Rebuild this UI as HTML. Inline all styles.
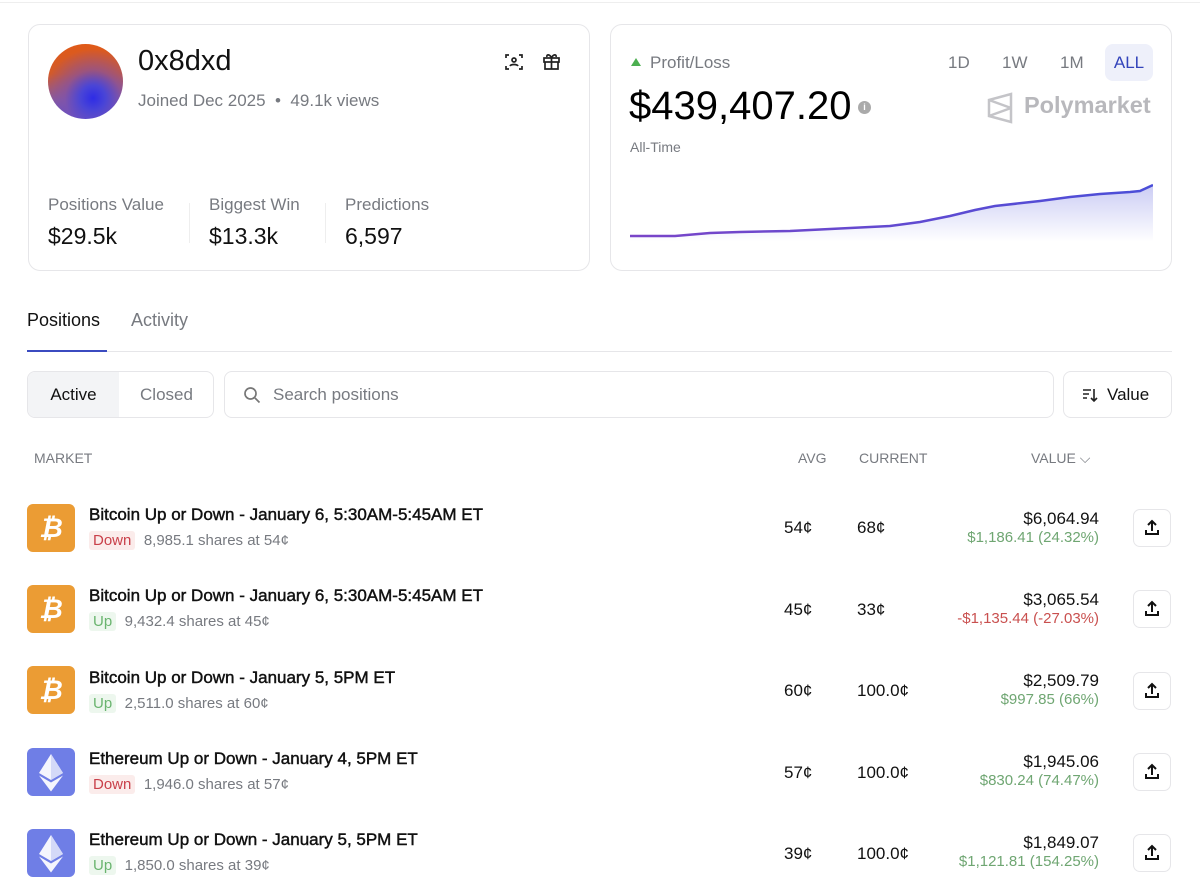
<!DOCTYPE html>
<html><head><meta charset="utf-8"><style>
*{box-sizing:border-box;margin:0;padding:0}
body{width:1200px;height:894px;background:#fff;font-family:"Liberation Sans",sans-serif;color:#111;position:relative;overflow:hidden}
.a{position:absolute}
.card{position:absolute;border:1px solid #e6e6e9;border-radius:12px;background:#fff}
.g{color:#777a80}
.row .t{font-size:17px;font-weight:normal;color:#111;-webkit-text-stroke:0.45px #111}
.tag{display:inline-block;padding:1px 4px;border-radius:3px;font-size:15px}
.dn{background:#fbeceb;color:#c9404a}
.up{background:#edf7ee;color:#6ab46f}
.num{font-size:17px}
.btn{position:absolute;width:38px;height:38px;border:1px solid #e6e6e9;border-radius:7px}
.btc{position:absolute;width:48px;height:48px;border-radius:6px;background:#eb9c34;color:#fff;font-size:27px;font-weight:bold;font-style:italic;text-align:center;line-height:48px}
</style></head><body>
<div class="a" style="left:0;top:2px;width:1200px;height:1px;background:#eee"></div>

<div class="card" style="left:28px;top:24px;width:562px;height:247px">
  <div class="a" style="left:19px;top:19px;width:75px;height:75px;border-radius:50%;background:radial-gradient(circle at 60% 72%,#2e2ce6 0%,#4a45d6 18%,rgba(120,80,180,0.6) 40%,rgba(200,90,60,0) 70%),linear-gradient(180deg,#e05a18 0%,#d25a2a 40%,#8b5a9a 75%,#5a4fd0 100%)"></div>
  <div class="a" style="left:109px;top:20px;font-size:29px;color:#111">0x8dxd</div>
  <div class="a g" style="left:109px;top:66px;font-size:17px">Joined Dec 2025 &nbsp;•&nbsp; 49.1k views</div>
  <svg class="a" style="left:476px;top:28px" width="18" height="18" viewBox="0 0 18 18" fill="none" stroke="#222" stroke-width="1.7"><path d="M1 5V2h3M14 2h3v3M17 13v3h-3M4 16H1v-3"/><circle cx="9" cy="7" r="2"/><path d="M5 13c1-2 7-2 8 0"/></svg>
  <svg class="a" style="left:513px;top:27px" width="19" height="19" viewBox="0 0 19 19" fill="none" stroke="#222" stroke-width="1.7"><rect x="2" y="6" width="15" height="4"/><path d="M3 10v7h13v-7M9.5 6v11M9.5 6C8 2 4 2 5 5M9.5 6c1.5-4 5.5-4 4.5-1"/></svg>
  <div class="a g" style="left:19px;top:170px;font-size:17px">Positions Value</div>
  <div class="a" style="left:19px;top:198px;font-size:23px">$29.5k</div>
  <div class="a" style="left:160px;top:178px;width:1px;height:40px;background:#eee"></div>
  <div class="a g" style="left:180px;top:170px;font-size:17px">Biggest Win</div>
  <div class="a" style="left:180px;top:198px;font-size:23px">$13.3k</div>
  <div class="a" style="left:296px;top:178px;width:1px;height:40px;background:#eee"></div>
  <div class="a g" style="left:316px;top:170px;font-size:17px">Predictions</div>
  <div class="a" style="left:316px;top:198px;font-size:23px">6,597</div>
</div>

<div class="card" style="left:610px;top:24px;width:562px;height:247px">
  <div class="a" style="left:20px;top:33px;width:0;height:0;border-left:5px solid transparent;border-right:5px solid transparent;border-bottom:8px solid #4caf50"></div>
  <div class="a g" style="left:39px;top:28px;font-size:17px">Profit/Loss</div>
  <div class="a g" style="left:337px;top:28px;font-size:17px">1D</div>
  <div class="a g" style="left:391px;top:28px;font-size:17px">1W</div>
  <div class="a g" style="left:449px;top:28px;font-size:17px">1M</div>
  <div class="a" style="left:494px;top:19px;width:48px;height:37px;border-radius:8px;background:#eef0fa;color:#3344bb;font-size:17px;text-align:center;line-height:37px">ALL</div>
  <div class="a" style="left:18px;top:59px;font-size:40px;color:#000">$439,407.20</div>
  <div class="a" style="left:247px;top:76px;width:13px;height:13px;border-radius:50%;background:#aaa;color:#fff;font-size:9px;text-align:center;line-height:13px;font-weight:bold">i</div>
  <svg class="a" style="left:376px;top:67px" width="26" height="32" viewBox="0 0 26 32" fill="none" stroke="#c4c4c8" stroke-width="2.5"><path d="M2 8L24 2v28L2 24zM2 8l22 8M2 24l22-8"/></svg>
  <div class="a" style="left:413px;top:67px;font-size:23.5px;color:#b8b8bc;font-weight:bold">Polymarket</div>
  <div class="a g" style="left:19px;top:114px;font-size:14px">All-Time</div>
  <svg class="a" style="left:19px;top:155px" width="523" height="65" viewBox="0 0 523 65">
    <defs><linearGradient id="f" x1="0" y1="0" x2="0" y2="1"><stop offset="0" stop-color="#6a6ee0" stop-opacity=".35"/><stop offset="1" stop-color="#6a6ee0" stop-opacity="0"/></linearGradient>
    <linearGradient id="l" x1="0" x2="1"><stop offset="0" stop-color="#7a45c8"/><stop offset="1" stop-color="#4a4ed8"/></linearGradient></defs>
    <path d="M0 56L45 56L80 53L110 52L160 51L220 48L260 46L290 42L320 36L345 30L365 26L410 21L440 17L470 14L500 12L510 11L523 5L523 62L0 62Z" fill="url(#f)"/>
    <path d="M0 56L45 56L80 53L110 52L160 51L220 48L260 46L290 42L320 36L345 30L365 26L410 21L440 17L470 14L500 12L510 11L523 5" fill="none" stroke="url(#l)" stroke-width="2.5"/>
  </svg>
</div>

<div class="a" style="left:27px;top:310px;font-size:18px;color:#111">Positions</div>
<div class="a g" style="left:131px;top:310px;font-size:18px">Activity</div>
<div class="a" style="left:27px;top:351px;width:1145px;height:1px;background:#e6e6e9"></div>
<div class="a" style="left:27px;top:350px;width:80px;height:2px;background:#3b4bc0"></div>

<div class="a" style="left:27px;top:371px;width:187px;height:47px;border:1px solid #e6e6e9;border-radius:8px;overflow:hidden">
  <div class="a" style="left:0;top:0;width:91px;height:45px;background:#f3f4f6;font-size:17px;text-align:center;line-height:45px">Active</div>
  <div class="a g" style="left:91px;top:0;width:95px;height:45px;font-size:17px;text-align:center;line-height:45px">Closed</div>
</div>
<div class="a" style="left:224px;top:371px;width:830px;height:47px;border:1px solid #e6e6e9;border-radius:8px">
  <svg class="a" style="left:18px;top:14px" width="18" height="18" viewBox="0 0 18 18" fill="none" stroke="#777" stroke-width="1.7"><circle cx="7.5" cy="7.5" r="5.5"/><path d="M12 12l4.5 4.5"/></svg>
  <div class="a g" style="left:48px;top:13px;font-size:17px">Search positions</div>
</div>
<div class="a" style="left:1063px;top:371px;width:109px;height:47px;border:1px solid #e6e6e9;border-radius:8px">
  <svg class="a" style="left:18px;top:15px" width="16" height="16" viewBox="0 0 16 16" fill="none" stroke="#222" stroke-width="1.6"><path d="M1 3h8M1 7h6M1 11h4M12 2v12M9 11l3 3 3-3"/></svg>
  <div class="a" style="left:43px;top:13px;font-size:17px">Value</div>
</div>

<div class="a g" style="left:34px;top:450px;font-size:14px">MARKET</div>
<div class="a g" style="left:798px;top:450px;font-size:14px">AVG</div>
<div class="a g" style="left:859px;top:450px;font-size:14px">CURRENT</div>
<div class="a g" style="left:1031px;top:450px;font-size:14px">VALUE ⌵</div>

<div class="row">
<div class="btc" style="left:27px;top:504px">₿</div>
<div class="a t" style="left:89px;top:505px">Bitcoin Up or Down - January 6, 5:30AM-5:45AM ET</div>
<div class="a" style="left:89px;top:531px"><span class="tag dn">Down</span> <span class="g" style="font-size:15px;margin-left:4px">8,985.1 shares at 54¢</span></div>
<div class="a num" style="left:784px;top:518px">54¢</div><div class="a num" style="left:857px;top:518px">68¢</div>
<div class="a num" style="right:101px;top:509px;text-align:right">$6,064.94<div style="font-size:15px;color:#6fa672">$1,186.41 (24.32%)</div></div>

<div class="btc" style="left:27px;top:585px">₿</div>
<div class="a t" style="left:89px;top:586px">Bitcoin Up or Down - January 6, 5:30AM-5:45AM ET</div>
<div class="a" style="left:89px;top:612px"><span class="tag up">Up</span> <span class="g" style="font-size:15px;margin-left:4px">9,432.4 shares at 45¢</span></div>
<div class="a num" style="left:784px;top:600px">45¢</div><div class="a num" style="left:857px;top:600px">33¢</div>
<div class="a num" style="right:101px;top:590px;text-align:right">$3,065.54<div style="font-size:15px;color:#c9504f">-$1,135.44 (-27.03%)</div></div>

<div class="btc" style="left:27px;top:666px">₿</div>
<div class="a t" style="left:89px;top:668px">Bitcoin Up or Down - January 5, 5PM ET</div>
<div class="a" style="left:89px;top:694px"><span class="tag up">Up</span> <span class="g" style="font-size:15px;margin-left:4px">2,511.0 shares at 60¢</span></div>
<div class="a num" style="left:784px;top:681px">60¢</div><div class="a num" style="left:857px;top:681px">100.0¢</div>
<div class="a num" style="right:101px;top:671px;text-align:right">$2,509.79<div style="font-size:15px;color:#6fa672">$997.85 (66%)</div></div>

<div class="a" style="left:27px;top:748px;width:48px;height:48px;border-radius:6px;background:#6f7ee6"><svg width="48" height="48" viewBox="0 0 48 48"><path d="M24 6L12 25l12 7 12-7z" fill="#fff" opacity=".92"/><path d="M24 6v26l12-7z" fill="#d4d9f8"/><path d="M12 27.5l12 16 12-16-12 7z" fill="#fff" opacity=".92"/></svg></div>
<div class="a t" style="left:89px;top:749px">Ethereum Up or Down - January 4, 5PM ET</div>
<div class="a" style="left:89px;top:775px"><span class="tag dn">Down</span> <span class="g" style="font-size:15px;margin-left:4px">1,946.0 shares at 57¢</span></div>
<div class="a num" style="left:784px;top:763px">57¢</div><div class="a num" style="left:857px;top:763px">100.0¢</div>
<div class="a num" style="right:101px;top:752px;text-align:right">$1,945.06<div style="font-size:15px;color:#6fa672">$830.24 (74.47%)</div></div>

<div class="a" style="left:27px;top:829px;width:48px;height:48px;border-radius:6px;background:#6f7ee6"><svg width="48" height="48" viewBox="0 0 48 48"><path d="M24 6L12 25l12 7 12-7z" fill="#fff" opacity=".92"/><path d="M24 6v26l12-7z" fill="#d4d9f8"/><path d="M12 27.5l12 16 12-16-12 7z" fill="#fff" opacity=".92"/></svg></div>
<div class="a t" style="left:89px;top:830px">Ethereum Up or Down - January 5, 5PM ET</div>
<div class="a" style="left:89px;top:856px"><span class="tag up">Up</span> <span class="g" style="font-size:15px;margin-left:4px">1,850.0 shares at 39¢</span></div>
<div class="a num" style="left:784px;top:844px">39¢</div><div class="a num" style="left:857px;top:844px">100.0¢</div>
<div class="a num" style="right:101px;top:833px;text-align:right">$1,849.07<div style="font-size:15px;color:#6fa672">$1,121.81 (154.25%)</div></div>
</div>

<div class="btn" style="left:1133px;top:509px"><svg width="36" height="36" viewBox="0 0 36 36" fill="none" stroke="#111" stroke-width="2"><path d="M18 21V11M14 15l4-4 4 4M12 20v4h12v-4"/></svg></div>
<div class="btn" style="left:1133px;top:590px"><svg width="36" height="36" viewBox="0 0 36 36" fill="none" stroke="#111" stroke-width="2"><path d="M18 21V11M14 15l4-4 4 4M12 20v4h12v-4"/></svg></div>
<div class="btn" style="left:1133px;top:672px"><svg width="36" height="36" viewBox="0 0 36 36" fill="none" stroke="#111" stroke-width="2"><path d="M18 21V11M14 15l4-4 4 4M12 20v4h12v-4"/></svg></div>
<div class="btn" style="left:1133px;top:753px"><svg width="36" height="36" viewBox="0 0 36 36" fill="none" stroke="#111" stroke-width="2"><path d="M18 21V11M14 15l4-4 4 4M12 20v4h12v-4"/></svg></div>
<div class="btn" style="left:1133px;top:834px"><svg width="36" height="36" viewBox="0 0 36 36" fill="none" stroke="#111" stroke-width="2"><path d="M18 21V11M14 15l4-4 4 4M12 20v4h12v-4"/></svg></div>
</body></html>
